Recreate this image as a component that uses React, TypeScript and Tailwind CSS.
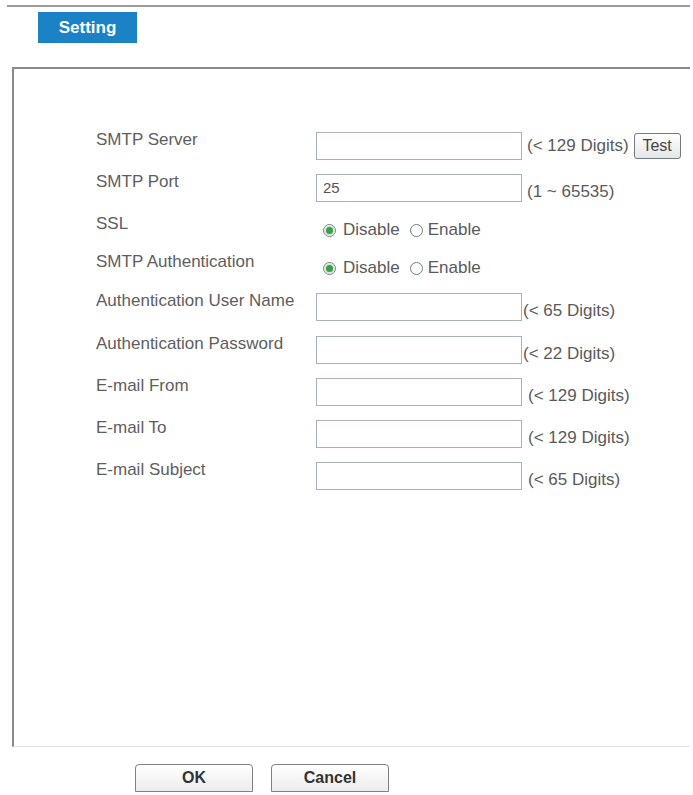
const font = { fontFamily: '"Liberation Sans", Arial, sans-serif' };

function TextBox({ value = '' }: { value?: string }) {
  return (
    <div className="w-[206px] h-[28px] border border-[#a9b2bb] bg-white flex items-center pl-[6px] text-[15px] text-[#555] shrink-0">
      {value}
    </div>
  );
}

function Radio({ checked }: { checked?: boolean }) {
  return (
    <span className="w-[13px] h-[13px] rounded-full border border-[#6f7d8b] bg-white flex items-center justify-center shrink-0">
      {checked && <span className="w-[7px] h-[7px] rounded-full bg-[#3f9d4a] ring-2 ring-[#cfe9cf]" />}
    </span>
  );
}

function RadioPair() {
  return (
    <div className="flex items-center text-[17px] text-[#5a5a5a]">
      <span className="ml-[7px]"><Radio checked /></span>
      <span className="ml-[7px]">Disable</span>
      <span className="ml-[10px]"><Radio /></span>
      <span className="ml-[5px]">Enable</span>
    </div>
  );
}

function Row({ label, top, children }: { label: string; top: number; children: React.ReactNode }) {
  return (
    <div className="flex h-[28px]" style={{ marginTop: top }}>
      <div className="w-[220px] shrink-0 self-start -mt-[1px] leading-[18px] text-[17px] text-[#5e5e5e] whitespace-nowrap">{label}</div>
      <div className="flex h-[28px]">{children}</div>
    </div>
  );
}

function Hint({ text, gap }: { text: string; gap: string }) {
  return (
    <span className={`self-end mb-[1px] leading-[18px] text-[17px] text-[#5a5a5a] whitespace-nowrap ${gap}`}>
      {text}
    </span>
  );
}

function Button({ children }: { children: React.ReactNode }) {
  return (
    <button className="w-[118px] h-[28px] border border-[#7f7f7f] rounded-t-[4px] bg-gradient-to-b from-white to-[#ececec] text-[16px] text-[#333] font-bold leading-none">
      {children}
    </button>
  );
}

export default function App() {
  return (
    <div className="w-[693px] h-[795px] bg-white overflow-hidden" style={font}>
      <div className="mt-[5px] ml-[7px] w-[683px] h-[2px] bg-[#9b9b9b]" />
      <div className="ml-[38px] mt-[5px] w-[99px] h-[31px] bg-[#1b82c5] flex items-center justify-center text-white font-bold text-[17px]">
        Setting
      </div>

      <div className="ml-[12px] mt-[24px] w-[678px] h-[680px] border-t-2 border-l-2 border-[#8a8a8a] border-b border-b-[#e4e4e4] pl-[82px] pt-[63px]">
        <Row label="SMTP Server" top={0}>
          <TextBox />
          <span className="self-center ml-[5px] text-[17px] text-[#5a5a5a] whitespace-nowrap">(&lt; 129 Digits)</span>
          <button className="ml-[5px] mt-[1px] w-[47px] h-[26px] border border-[#6f7a83] rounded-[3px] bg-gradient-to-b from-white to-[#e6e6e6] text-[16px] text-[#444] leading-none">
            Test
          </button>
        </Row>
        <Row label="SMTP Port" top={14}>
          <TextBox value="25" />
          <Hint text="(1 ~ 65535)" gap="ml-[5px]" />
        </Row>
        <Row label="SSL" top={14}>
          <RadioPair />
        </Row>
        <Row label="SMTP Authentication" top={10}>
          <RadioPair />
        </Row>
        <Row label="Authentication User Name" top={11}>
          <TextBox />
          <Hint text="(< 65 Digits)" gap="ml-[1px]" />
        </Row>
        <Row label="Authentication Password" top={15}>
          <TextBox />
          <Hint text="(< 22 Digits)" gap="ml-[1px]" />
        </Row>
        <Row label="E-mail From" top={14}>
          <TextBox />
          <Hint text="(< 129 Digits)" gap="ml-[6px]" />
        </Row>
        <Row label="E-mail To" top={14}>
          <TextBox />
          <Hint text="(< 129 Digits)" gap="ml-[6px]" />
        </Row>
        <Row label="E-mail Subject" top={14}>
          <TextBox />
          <Hint text="(< 65 Digits)" gap="ml-[6px]" />
        </Row>
      </div>

      <div className="flex gap-[18px] ml-[135px] mt-[17px]">
        <Button>OK</Button>
        <Button>Cancel</Button>
      </div>
    </div>
  );
}
